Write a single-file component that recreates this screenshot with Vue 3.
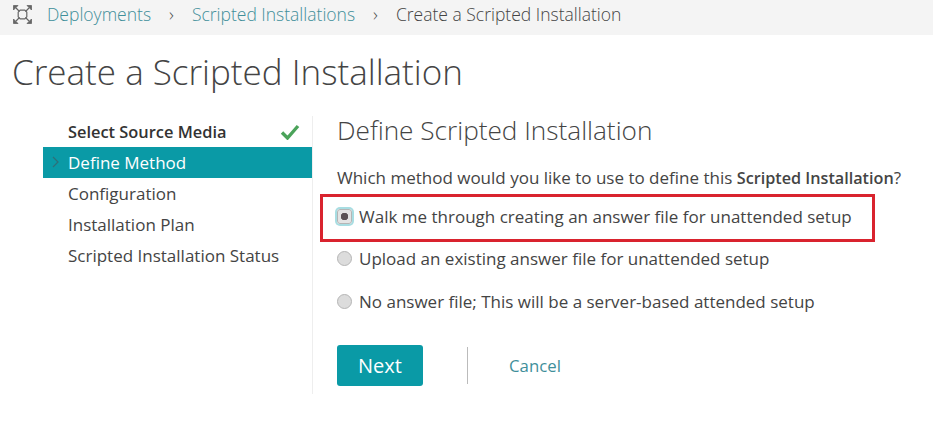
<script setup>
const steps = [
  { label: 'Select Source Media', state: 'done' },
  { label: 'Define Method', state: 'active' },
  { label: 'Configuration', state: '' },
  { label: 'Installation Plan', state: '' },
  { label: 'Scripted Installation Status', state: '' },
]
const options = [
  { label: 'Walk me through creating an answer file for unattended setup', checked: true },
  { label: 'Upload an existing answer file for unattended setup', checked: false },
  { label: 'No answer file; This will be a server-based attended setup', checked: false },
]
</script>

<template>
  <div class="page">
    <nav class="crumbs">
      <svg class="logo" width="19" height="19" viewBox="0 0 19 19" fill="none" stroke="#666" stroke-width="1.2">
        <path d="M0.5 0.5H5L0.5 5ZM18.5 0.5V5L14 0.5ZM18.5 18.5H14L18.5 14ZM0.5 18.5V14L5 18.5Z" fill="#666" stroke-width="0.8" />
        <path d="M3 3L6.5 6.5M16 3L12.5 6.5M3 16L6.5 12.5M16 16L12.5 12.5" />
        <path d="M7.2 5.2H11.8L13.8 7.2V11.8L11.8 13.8H7.2L5.2 11.8V7.2Z" />
      </svg>
      <a class="crumb">Deployments</a>
      <span class="sep">›</span>
      <a class="crumb">Scripted Installations</a>
      <span class="sep">›</span>
      <span class="current">Create a Scripted Installation</span>
    </nav>

    <h1 class="title">Create a Scripted Installation</h1>

    <div class="wizard">
      <ul class="steps">
        <li v-for="s in steps" :key="s.label" class="step" :class="s.state">
          <svg v-if="s.state === 'active'" class="chev" width="7" height="12" viewBox="0 0 7 12" fill="none" stroke="#2f6f78" stroke-width="1.2">
            <path d="M1 1L6 6L1 11" />
          </svg>
          <span>{{ s.label }}</span>
          <svg v-if="s.state === 'done'" class="check" width="20" height="16" viewBox="0 0 20 16" fill="none" stroke="#4ba35a" stroke-width="3.4">
            <path d="M2 8.5L7.5 14L18 2" />
          </svg>
        </li>
      </ul>

      <section class="content">
        <h2 class="heading">Define Scripted Installation</h2>
        <p class="question">Which method would you like to use to define this <b>Scripted Installation</b>?</p>
        <div class="options">
          <label v-for="o in options" :key="o.label" class="option" :class="{ marked: o.checked }">
            <span class="radio" :class="{ on: o.checked }"></span>
            <span>{{ o.label }}</span>
          </label>
        </div>
        <div class="actions">
          <button class="next">Next</button>
          <span class="divider"></span>
          <a class="cancel">Cancel</a>
        </div>
      </section>
    </div>
  </div>
</template>

<style>
html, body { margin: 0; background: #fff; }
</style>

<style scoped>
.page {
  width: 933px;
  height: 424px;
  overflow: hidden;
  background: #fff;
  font-family: "Open Sans", sans-serif;
  color: #444;
}
.crumbs {
  height: 35px;
  box-sizing: border-box;
  background: #f4f4f4;
  display: flex;
  align-items: center;
  padding: 0 0 8px 13px;
  font-size: 17.5px;
  font-weight: 300;
}
.logo { margin: 2px 15px 0 0; }
.crumb { color: #3f8f9a; }
.sep { margin: 0 18px; color: #555; font-size: 19px; }
.current { color: #444; }
.title {
  margin: 15px 0 0 12px;
  font-size: 35px;
  line-height: 44px;
  font-weight: 300;
  color: #444;
}
.wizard {
  display: flex;
  margin: 22px 0 0 43px;
}
.steps {
  list-style: none;
  margin: 0;
  padding: 0;
  width: 269px;
}
.step {
  height: 31px;
  display: flex;
  align-items: center;
  position: relative;
  padding-left: 25px;
  padding-right: 12px;
  font-size: 17px;
  color: #444;
  justify-content: space-between;
}
.step.done { font-weight: 600; font-size: 16.4px; color: #333; }
.step.active { background: #0a9aa6; color: #fff; }
.chev { position: absolute; left: 9px; top: 9px; }
.content {
  flex: 1;
  border-left: 1px solid #eee;
  padding-left: 24px;
  height: 278px;
}
.heading {
  margin: -2px 0 0;
  font-size: 26.2px;
  line-height: 33px;
  font-weight: 300;
  color: #444;
}
.question {
  margin: 20px 0 0;
  font-size: 17px;
  line-height: 22px;
  white-space: nowrap;
}
.question b { font-weight: 600; font-size: 16.2px; }
.options { margin-top: 6px; }
.option {
  display: flex;
  align-items: center;
  gap: 7px;
  height: 42.5px;
  font-size: 17px;
  white-space: nowrap;
}
.option.marked { position: relative; }
.option.marked::before {
  content: "";
  position: absolute;
  left: -17px;
  top: -1px;
  width: 549px;
  height: 42px;
  border: 3px solid #d9232e;
}
.radio {
  width: 15px;
  height: 15px;
  border-radius: 50%;
  background: #dcdcdc;
  border: 1px solid #b5b5b5;
  box-sizing: border-box;
  flex: none;
}
.radio.on {
  background: radial-gradient(circle, #5b5256 0 3.5px, #e4e4e4 4px);
  box-shadow: 0 0 0 2px #a8dde2;
  border-radius: 3px;
}
.actions {
  display: flex;
  align-items: center;
  margin-top: 22px;
}
.next {
  width: 86px;
  height: 41px;
  border: 0;
  border-radius: 3px;
  background: #0a9aa6;
  color: #fff;
  font: 400 20px "Open Sans", sans-serif;
}
.divider {
  width: 1px;
  height: 37px;
  background: #bbb;
  margin: 0 41px 0 44px;
}
.cancel { color: #3f8f9a; font-size: 16.8px; }
</style>
